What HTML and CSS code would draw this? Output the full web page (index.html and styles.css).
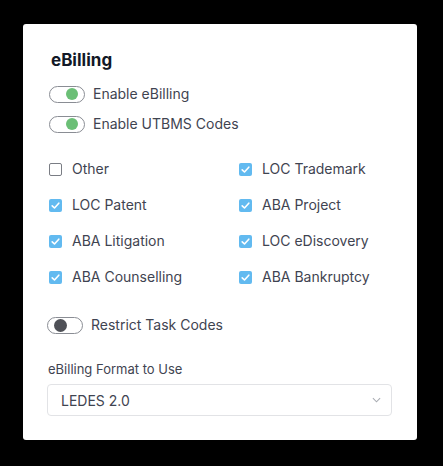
FILE: index.html
```html
<!DOCTYPE html>
<html>
<head>
<meta charset="utf-8">
<link rel="stylesheet" href="styles.css">
</head>
<body>
<div class="card">
  <h2 class="title">eBilling</h2>
  <div class="toggle-row first">
    <span class="toggle on"><span class="knob"></span></span>
    <span class="label">Enable eBilling</span>
  </div>
  <div class="toggle-row">
    <span class="toggle on"><span class="knob"></span></span>
    <span class="label">Enable UTBMS Codes</span>
  </div>
  <div class="grid">
    <div class="check-row"><span class="box"></span><span class="label">Other</span></div>
    <div class="check-row"><span class="box checked"><svg viewBox="0 0 13 13"><path d="M3.2 6.8 L5.5 9 L9.8 4.2" /></svg></span><span class="label">LOC Trademark</span></div>
    <div class="check-row"><span class="box checked"><svg viewBox="0 0 13 13"><path d="M3.2 6.8 L5.5 9 L9.8 4.2" /></svg></span><span class="label">LOC Patent</span></div>
    <div class="check-row"><span class="box checked"><svg viewBox="0 0 13 13"><path d="M3.2 6.8 L5.5 9 L9.8 4.2" /></svg></span><span class="label">ABA Project</span></div>
    <div class="check-row"><span class="box checked"><svg viewBox="0 0 13 13"><path d="M3.2 6.8 L5.5 9 L9.8 4.2" /></svg></span><span class="label">ABA Litigation</span></div>
    <div class="check-row"><span class="box checked"><svg viewBox="0 0 13 13"><path d="M3.2 6.8 L5.5 9 L9.8 4.2" /></svg></span><span class="label">LOC eDiscovery</span></div>
    <div class="check-row"><span class="box checked"><svg viewBox="0 0 13 13"><path d="M3.2 6.8 L5.5 9 L9.8 4.2" /></svg></span><span class="label">ABA Counselling</span></div>
    <div class="check-row"><span class="box checked"><svg viewBox="0 0 13 13"><path d="M3.2 6.8 L5.5 9 L9.8 4.2" /></svg></span><span class="label">ABA Bankruptcy</span></div>
  </div>
  <div class="toggle-row restrict">
    <span class="toggle off"><span class="knob"></span></span>
    <span class="label">Restrict Task Codes</span>
  </div>
  <div class="field-label">eBilling Format to Use</div>
  <div class="select">
    <span class="select-value">LEDES 2.0</span>
    <svg class="chevron" viewBox="0 0 10 6"><path d="M1 1 L5 5 L9 1" /></svg>
  </div>
</div>
</body>
</html>
```

FILE: styles.css
```css
html, body {
  margin: 0;
  padding: 0;
  background: #000;
  height: 100%;
}

body {
  font-family: Inter, "Noto Sans", sans-serif;
  color: #3f4451;
  padding-top: 24px;
  padding-left: 23px;
  box-sizing: border-box;
}

.card {
  width: 394px;
  height: 416px;
  box-sizing: border-box;
  background: #fff;
  border-radius: 3px;
  padding: 24px 25px 24px 25px;
}

.title {
  margin: 0;
  font-size: 17px;
  line-height: 24px;
  font-weight: 700;
  color: #111827;
  padding-left: 3px;
}

.toggle-row {
  display: flex;
  align-items: center;
  height: 30px;
  gap: 8px;
}

.toggle-row.first {
  margin-top: 7px;
}

.toggle {
  position: relative;
  box-sizing: border-box;
  width: 36px;
  height: 17px;
  border: 1px solid #8a8d94;
  border-radius: 9px;
  background: #fff;
  flex: none;
  margin-left: 1px;
}

.knob {
  position: absolute;
  top: 1.5px;
  width: 12px;
  height: 12px;
  border-radius: 50%;
}

.toggle.on .knob {
  right: 6px;
  background: #6bbf76;
}

.toggle.off .knob {
  left: 6px;
  width: 13px;
  height: 13px;
  top: 1px;
  background: #4f5157;
}

.label {
  font-size: 14px;
  line-height: 18px;
  color: #3f4451;
  white-space: nowrap;
}

.grid {
  margin-top: 12px;
  display: grid;
  grid-template-columns: 190px 1fr;
  grid-auto-rows: 36px;
}

.check-row {
  display: flex;
  align-items: center;
  gap: 10px;
}

.box {
  box-sizing: border-box;
  width: 13px;
  height: 13px;
  border: 1px solid #7a7d84;
  border-radius: 2px;
  margin-left: 1px;
  flex: none;
  display: flex;
}

.box.checked {
  border: none;
  background: #62baf0;
}

.box svg {
  width: 13px;
  height: 13px;
  fill: none;
  stroke: #fff;
  stroke-width: 1.6;
  stroke-linecap: round;
  stroke-linejoin: round;
}

.toggle-row.restrict {
  margin-top: 15px;
}

.toggle-row.restrict .toggle {
  margin-left: -1px;
}

.field-label {
  margin-top: 20px;
  font-size: 13px;
  line-height: 18px;
  color: #3f4451;
}

.select {
  margin-top: 6px;
  margin-left: -1px;
  width: 345px;
  height: 32px;
  box-sizing: border-box;
  border: 1px solid #e2e3e6;
  border-radius: 4px;
  display: flex;
  align-items: center;
  justify-content: space-between;
  padding: 0 10px 0 13px;
}

.select-value {
  font-size: 14px;
  color: #3f4451;
}

.chevron {
  width: 9px;
  height: 6px;
  fill: none;
  stroke: #a9acb2;
  stroke-width: 1.2;
}
```
